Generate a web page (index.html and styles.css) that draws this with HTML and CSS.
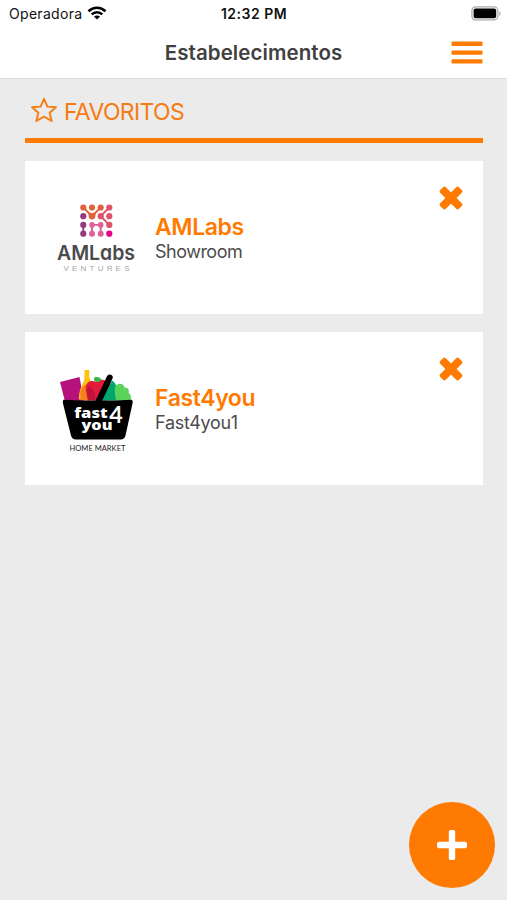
FILE: index.html
```html
<!DOCTYPE html>
<html lang="pt-BR">
<head>
<meta charset="utf-8">
<title>Estabelecimentos</title>
<link rel="stylesheet" href="styles.css">
</head>
<body>
<header class="header">
  <div class="status">
    <div class="carrier"><span>Operadora</span>
      <svg class="wifi" width="20" height="14" viewBox="0 0 20 14" fill="none" stroke="#000" stroke-width="2.6"><path d="M1.5 5.2C6.3.5 13.7.5 18.5 5.2M4.7 8.4c3-2.9 7.6-2.9 10.6 0"/><path d="M10 13.6 6.9 10.6c1.7-1.6 4.5-1.6 6.2 0z" fill="#000" stroke="none"/></svg>
    </div>
    <span class="time">12:32 PM</span>
    <svg class="battery" width="30" height="15" viewBox="0 0 30 15"><rect x=".9" y=".9" width="26" height="13" rx="3.8" fill="#fff" stroke="#aaa" stroke-width="1.2"/><rect x="2.6" y="2.6" width="22.6" height="9.6" rx="2" fill="#000"/><path d="M28.3 5.2c1.8.7 1.8 3.9 0 4.6z" fill="#aaa"/></svg>
  </div>
  <div class="navbar">
    <h1 class="title">Estabelecimentos</h1>
    <svg class="menu" width="32" height="24" viewBox="0 0 32 24" fill="#ff7a00"><rect x=".5" y=".5" width="31" height="4.4" rx="1"/><rect x=".5" y="9.4" width="31" height="4.4" rx="1"/><rect x=".5" y="18.2" width="31" height="4.4" rx="1"/></svg>
  </div>
</header>
<main class="content">
  <div class="section">
    <svg class="star" width="28" height="26" viewBox="0 0 28 26"><path d="M14 1.8 17.4 9.6 26 10.3 19.6 15.8 21.7 24 14 19.6 6.3 24 8.4 15.8 2 10.3 10.6 9.6Z" fill="none" stroke="#f57c12" stroke-width="1.9" stroke-linejoin="round"/></svg>
    <h2 class="section-title">FAVORITOS</h2>
  </div>
  <article class="card">
    <svg class="logo" width="82" height="80" viewBox="55 197.5 82 80">
      <g fill="none" stroke-width="1.9">
        <path d="M83.3 207 92 215.7 100.7 207" stroke="#e5643b"/>
        <path d="M109.3 207 100.7 215.7 109.3 224.4" stroke="#dd5068"/>
        <path d="M83.3 224.4v8.8" stroke="#963b7d"/>
        <path d="M92 233.2v-8.8h8.7v8.8" stroke="#df5990"/>
      </g>
      <path d="M88 211.5q4 1.8 8 0l-1 6q-3 2.5-6 0z" fill="#e5643b"/>
      <g fill="#e0623c"><circle cx="83.3" cy="207" r="3.1"/><circle cx="92" cy="207" r="3.1"/><circle cx="100.7" cy="207" r="3.1"/><circle cx="92" cy="215.7" r="3.1"/></g>
      <g fill="#dc546a"><circle cx="109.3" cy="207" r="3.1"/><circle cx="100.7" cy="215.7" r="3.1"/><circle cx="109.3" cy="215.7" r="3.1"/><circle cx="109.3" cy="224.4" r="3.1"/></g>
      <g fill="#963b7d"><circle cx="83.3" cy="215.7" r="3.1"/><circle cx="83.3" cy="224.4" r="3.1"/><circle cx="83.3" cy="233.2" r="3.1"/></g>
      <g fill="#df609a"><circle cx="92" cy="224.4" r="2.8"/><circle cx="100.7" cy="224.4" r="2.8"/><circle cx="92" cy="233.2" r="3"/><circle cx="100.7" cy="233.2" r="3"/></g>
      <circle cx="109.3" cy="233.2" r="3.1" fill="#e6008c"/>
      <text class="aml" x="57" y="259.400" textLength="78" lengthAdjust="spacingAndGlyphs">AMLɑbs</text>
      <text class="ventures" x="63.5" y="270.8" textLength="66">VENTURES</text>
    </svg>
    <div class="info"><h3 class="name">AMLabs</h3><p class="place">Showroom</p></div>
    <svg class="remove" width="24" height="24" viewBox="0 0 24 24" fill="#ff7a00"><g transform="rotate(45 12 12)"><rect x="-1.300" y="8" width="26.600" height="8" rx="2"/><rect x="8" y="-1.300" width="8" height="26.600" rx="2"/></g></svg>
  </article>
  <article class="card">
    <svg class="logo" width="82" height="90" viewBox="55 363.5 82 90">
      <path d="M60 381.5 79.5 376.5 84 401H65Z" fill="#b5127d"/>
      <path d="M84.5 369.5h4.8V376c0 3 3 5 3 9v14H79c0-14 5.5-15 5.5-23z" fill="#ffc20e"/>
      <path d="M81 400c-2-9 0-14 5-16l4 16z" fill="#f58220"/>
      <path d="M94.5 381c-6-2-10 3-8.500 10 1 5 4 9 8 9h12l4-16c-4-5-9-6-13-3z" fill="#e31b3b"/>
      <path d="M88 400c-2-6-1-11 1-15 5 4 7 9 6 15z" fill="#c1123c"/>
      <path d="M97 381.500c-4 0-3.500-5-1.500-5 3-.5 5 .5 6 3-1.500 1.500-3 2-4.500 2z" fill="#39b54a"/>
      <path d="M112 380c4 2 6 8 5 20h-16z" fill="#00a66c"/>
      <path d="M116 400c-1-6-2-12 0-15 3-3 8-2 8.500 2 4 0 5 3 4 5 2.500 2 3 5 2 8z" fill="#5bd25a"/>
      <path d="M109.700 377 98 402" stroke="#000" stroke-width="6" stroke-linecap="round"/>
      <path d="M63.500 399.200Q98 401 131.500 399.200 133.500 400.500 132.500 403L125.500 435Q124.500 439 120.500 439H76Q72 439 71 435L63 403Q62.400 400 63.500 399.200Z" fill="#000"/>
      <text class="fast" x="74.200" y="417.800" textLength="33.500" lengthAdjust="spacingAndGlyphs">fast</text>
      <text class="fast" x="81.500" y="429.600" textLength="31" lengthAdjust="spacingAndGlyphs">you</text>
      <text class="four" x="109.300" y="422.700" textLength="13.500" lengthAdjust="spacingAndGlyphs">4</text>
      <text class="market" x="69.500" y="450.200" textLength="56" lengthAdjust="spacingAndGlyphs">HOME MARKET</text>
    </svg>
    <div class="info"><h3 class="name">Fast4you</h3><p class="place fast-place">Fast4you1</p></div>
    <svg class="remove" width="24" height="24" viewBox="0 0 24 24" fill="#ff7a00"><g transform="rotate(45 12 12)"><rect x="-1.300" y="8" width="26.600" height="8" rx="2"/><rect x="8" y="-1.300" width="8" height="26.600" rx="2"/></g></svg>
  </article>
</main>
<button class="add" aria-label="Adicionar"><svg width="32" height="32" viewBox="0 0 32 32" fill="#fff"><rect x="1" y="12.800" width="30" height="6.400" rx="1.800"/><rect x="12.800" y="1" width="6.400" height="30" rx="1.800"/></svg></button>
</body>
</html>
```
FILE: styles.css
```css
* { box-sizing: border-box; }
body { margin: 0; height: 900px; overflow: hidden; background: #ebebeb; font-family: Inter, "Liberation Sans", sans-serif; color: #444; }
h1, h2, h3, p { margin: 0; }
svg { display: block; flex: none; overflow: visible; }
.header { height: 79px; background: #fff; border-bottom: 1px solid #dedede; }
.status { display: grid; grid-template-columns: 1fr auto 1fr; align-items: center; height: 27px; padding: 0 6px 0 7px; color: #111; }
.carrier { display: flex; align-items: center; gap: 5px; margin-left: 2px; font-size: 14px; letter-spacing: .3px; }
.wifi { margin-top: -2px; }
.time { font-size: 14px; font-weight: 600; letter-spacing: .5px; }
.battery { justify-self: end; }
.navbar { display: grid; grid-template-columns: 32px 1fr 32px; align-items: center; height: 50px; padding: 0 24px; }
.title { grid-column: 2; text-align: center; font-size: 20.5px; font-weight: 600; color: #404040; letter-spacing: .08px; }
.menu { margin-top: 1px; }
.content { display: flex; flex-direction: column; padding: 0 24.5px 0 25px; }
.section { display: flex; align-items: center; height: 64px; margin-bottom: 18px; padding-left: 5px; border-bottom: 5px solid #ff7a00; }
.star { margin-top: 3px; }
.section-title { margin: 6px 0 0 6px; font-size: 23px; line-height: 28px; font-weight: 400; color: #f57c12; letter-spacing: -.65px; }
.card { display: flex; align-items: center; height: 153px; margin-bottom: 18px; padding: 0 20px 0 30px; background: #fff; }
.info { flex: 1; margin: 2px 0 0 18px; }
.name { font-size: 23px; line-height: 27px; font-weight: 600; color: #ff7a00; letter-spacing: -.4px; }
.place { font-size: 18px; line-height: 22px; color: #4c4c4c; letter-spacing: -.5px; }
.fast-place { letter-spacing: -.3px; }
.remove { align-self: flex-start; margin-top: 25px; }
.aml { font: 600 20.500px Inter, "DejaVu Sans", sans-serif; fill: #4a4a4c; }
.ventures { font: 400 8px "Liberation Sans", sans-serif; fill: #a5a5a5; }
.fast { font: 800 14px "Open Sans", sans-serif; fill: #fff; }
.four { font: 700 22px Lato, sans-serif; fill: #fff; }
.market { font: 400 7.500px Lato, sans-serif; fill: #222; }
.add { position: fixed; right: 12px; bottom: 12px; display: grid; place-items: center; width: 86px; height: 86px; padding: 0; border: 0; border-radius: 50%; background: #ff7a00; }
```
